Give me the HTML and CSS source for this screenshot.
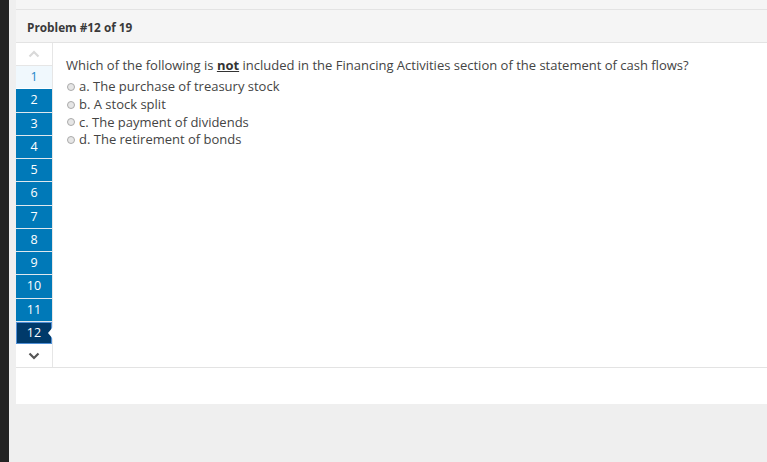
FILE: index.html
```html
<!DOCTYPE html>
<html>
<head>
<meta charset="utf-8">
<link rel="stylesheet" href="styles.css">
</head>
<body>
<div class="darkbar"></div>
<div class="main">
  <div class="topstrip"></div>
  <div class="header">Problem #12 of 19</div>
  <div class="panel">
    <div class="row">
      <div class="sidebar">
        <div class="nav-arrow up"><svg width="12" height="8" viewBox="0 0 12 8"><path d="M1.5 6.5 L6 2 L10.5 6.5" fill="none" stroke="#d9d9d9" stroke-width="2.2"/></svg></div>
        <ul class="items">
          <li class="item first">1</li>
          <li class="item">2</li>
          <li class="item">3</li>
          <li class="item">4</li>
          <li class="item">5</li>
          <li class="item">6</li>
          <li class="item">7</li>
          <li class="item">8</li>
          <li class="item">9</li>
          <li class="item">10</li>
          <li class="item">11</li>
          <li class="item current">12<span class="notch"></span></li>
        </ul>
        <div class="nav-arrow down"><svg width="12" height="8" viewBox="0 0 12 8"><path d="M1.5 1.5 L6 6 L10.5 1.5" fill="none" stroke="#555" stroke-width="2.2"/></svg></div>
      </div>
      <div class="content">
        <p class="question">Which of the following is <b><u>not</u></b> included in the Financing Activities section of the statement of cash flows?</p>
        <ul class="options">
          <li><span class="radio"></span>a. The purchase of treasury stock</li>
          <li><span class="radio"></span>b. A stock split</li>
          <li><span class="radio"></span>c. The payment of dividends</li>
          <li><span class="radio"></span>d. The retirement of bonds</li>
        </ul>
      </div>
    </div>
    <div class="footer"></div>
  </div>
</div>
</body>
</html>
```
FILE: styles.css
```css
html, body { margin: 0; padding: 0; }
body {
  background: #efefef;
  display: flex;
  height: 462px;
  overflow: hidden;
  font-family: "Open Sans", "DejaVu Sans", sans-serif;
}
.darkbar {
  width: 9px;
  background: #232323;
  flex: none;
}
.main {
  flex: 1;
  margin-left: 7px;
  display: flex;
  flex-direction: column;
}
.topstrip {
  height: 9px;
  background: #f5f5f5;
  border-bottom: 1px solid #e3e3e3;
}
.header {
  height: 32px;
  background: #f5f5f5;
  border-bottom: 1px solid #e3e3e3;
  padding-left: 11px;
  font-family: "Open Sans", sans-serif;
  font-weight: 700;
  font-size: 11.8px;
  line-height: 34px;
  color: #3a3a3a;
}
.panel {
  background: #fff;
}
.row {
  display: flex;
  border-bottom: 1px solid #e3e3e3;
}
.sidebar {
  width: 36px;
  border-right: 1px solid #e6e6e6;
  flex: none;
}
.nav-arrow {
  height: 22px;
  display: flex;
  align-items: center;
  justify-content: center;
}
.nav-arrow.up {
  border-bottom: 1px solid #e6e6e6;
}
.items {
  list-style: none;
  margin: 0;
  padding: 0;
}
.item {
  position: relative;
  height: 22.25px;
  border-bottom: 1px solid #dfe8ee;
  background: #0079b8;
  color: #fff;
  font-size: 12.5px;
  line-height: 22px;
  text-align: center;
  box-sizing: content-box;
}
.item.first {
  background: #f0f8fd;
  color: #1b86c8;
  border-bottom-color: #fff;
}
.item.current {
  background: #003a6a;
  box-shadow: inset 0 0 0 1px #4f8fd6;
  border-bottom-color: #fff;
}
.notch {
  position: absolute;
  right: -1px;
  top: 50%;
  margin-top: -6px;
  width: 0;
  height: 0;
  border-top: 6px solid transparent;
  border-bottom: 6px solid transparent;
  border-right: 5px solid #fff;
}
.content {
  flex: 1;
  padding: 13px 0 0 13px;
  color: #444;
  font-size: 13px;
}
.question {
  margin: 0 0 4px;
  line-height: 18px;
}
.question b { color: #333; }
.options {
  list-style: none;
  margin: 0;
  padding: 0;
}
.options li {
  height: 17.8px;
  line-height: 17.8px;
  display: flex;
  align-items: center;
  padding-left: 1px;
}
.radio {
  width: 6px;
  height: 6px;
  border: 1px solid #aaa;
  background: #e6e6e6;
  border-radius: 50%;
  margin-right: 4px;
  flex: none;
}
.footer {
  height: 36px;
}
```
